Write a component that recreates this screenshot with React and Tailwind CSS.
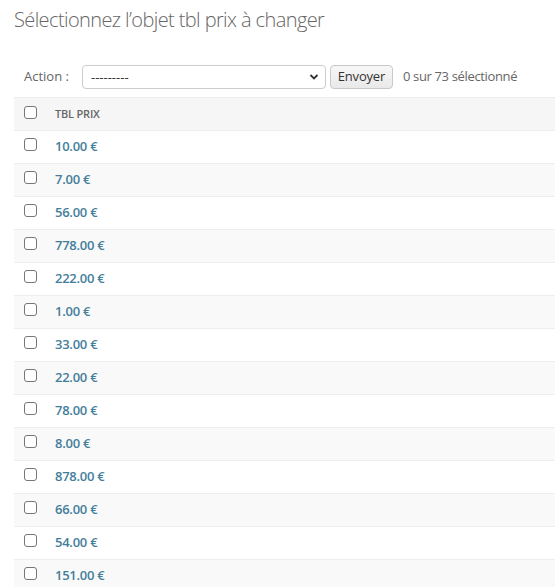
import React from 'react';

const prices = ['10.00', '7.00', '56.00', '778.00', '222.00', '1.00', '33.00', '22.00', '78.00', '8.00', '878.00', '66.00', '54.00', '151.00'];

const Box = () => (
    <span className="block w-[13px] h-[13px] rounded-[3px] border border-[#767676] bg-white" />
);

export default function App() {
    return (
        <div className="w-[555px] h-[587px] overflow-hidden bg-white text-[#333]" style={{ fontFamily: '"Open Sans", "Noto Sans", sans-serif' }}>
            <div className="pl-[14px] w-[600px]">
                <h1 className="text-[20px] font-light text-[#666] pt-[5px] h-[57px] tracking-[-0.6px]">Sélectionnez l’objet tbl prix à changer</h1>

                {/* Actions */}
                <div className="flex items-center h-[40px] pl-[10px]">
                    <span className="text-[13px] text-[#666] mr-[13px]">Action :</span>
                    <div className="flex items-center justify-between w-[244px] h-[24px] border border-[#ccc] rounded-[4px] px-[8px] text-[13px]">
                        <span className="leading-none">---------</span>
                        <svg width="10" height="8" viewBox="0 0 10 8" className="mr-[-2px]">
                            <path d="M1.5 2l3.5 3.5L8.5 2" fill="none" stroke="#333" strokeWidth="1.8" />
                        </svg>
                    </div>
                    <button className="ml-[4px] h-[24px] w-[63px] rounded-[4px] border border-[#c8c8c8] bg-gradient-to-b from-[#f7f7f7] to-[#e9e9e9] text-[13px] text-[#333] tracking-[-0.2px]">Envoyer</button>
                    <span className="ml-[10px] text-[13px] text-[#666] tracking-[-0.35px]">0 sur 73 sélectionné</span>
                </div>

                {/* Table */}
                <div className="border-t border-[#eee]">
                    <div className="flex items-center h-[33px] bg-[#f6f6f6] border-b border-[#eee]">
                        <div className="w-[41px] pl-[10px] -mt-[3px]"><Box /></div>
                        <span className="text-[11px] font-semibold text-[#666] uppercase tracking-[-0.2px]">Tbl prix</span>
                    </div>
                    {prices.map((p, i) => (
                        <div key={p} className={`flex items-center h-[33px] border-b border-[#eee] ${i % 2 ? 'bg-[#f9f9f9]' : 'bg-white'}`}>
                            <div className="w-[41px] pl-[10px] -mt-[5px]"><Box /></div>
                            <a className="text-[13px] font-semibold text-[#447e9b] tracking-[-0.25px]">{p} €</a>
                        </div>
                    ))}
                </div>
            </div>
        </div>
    );
}
